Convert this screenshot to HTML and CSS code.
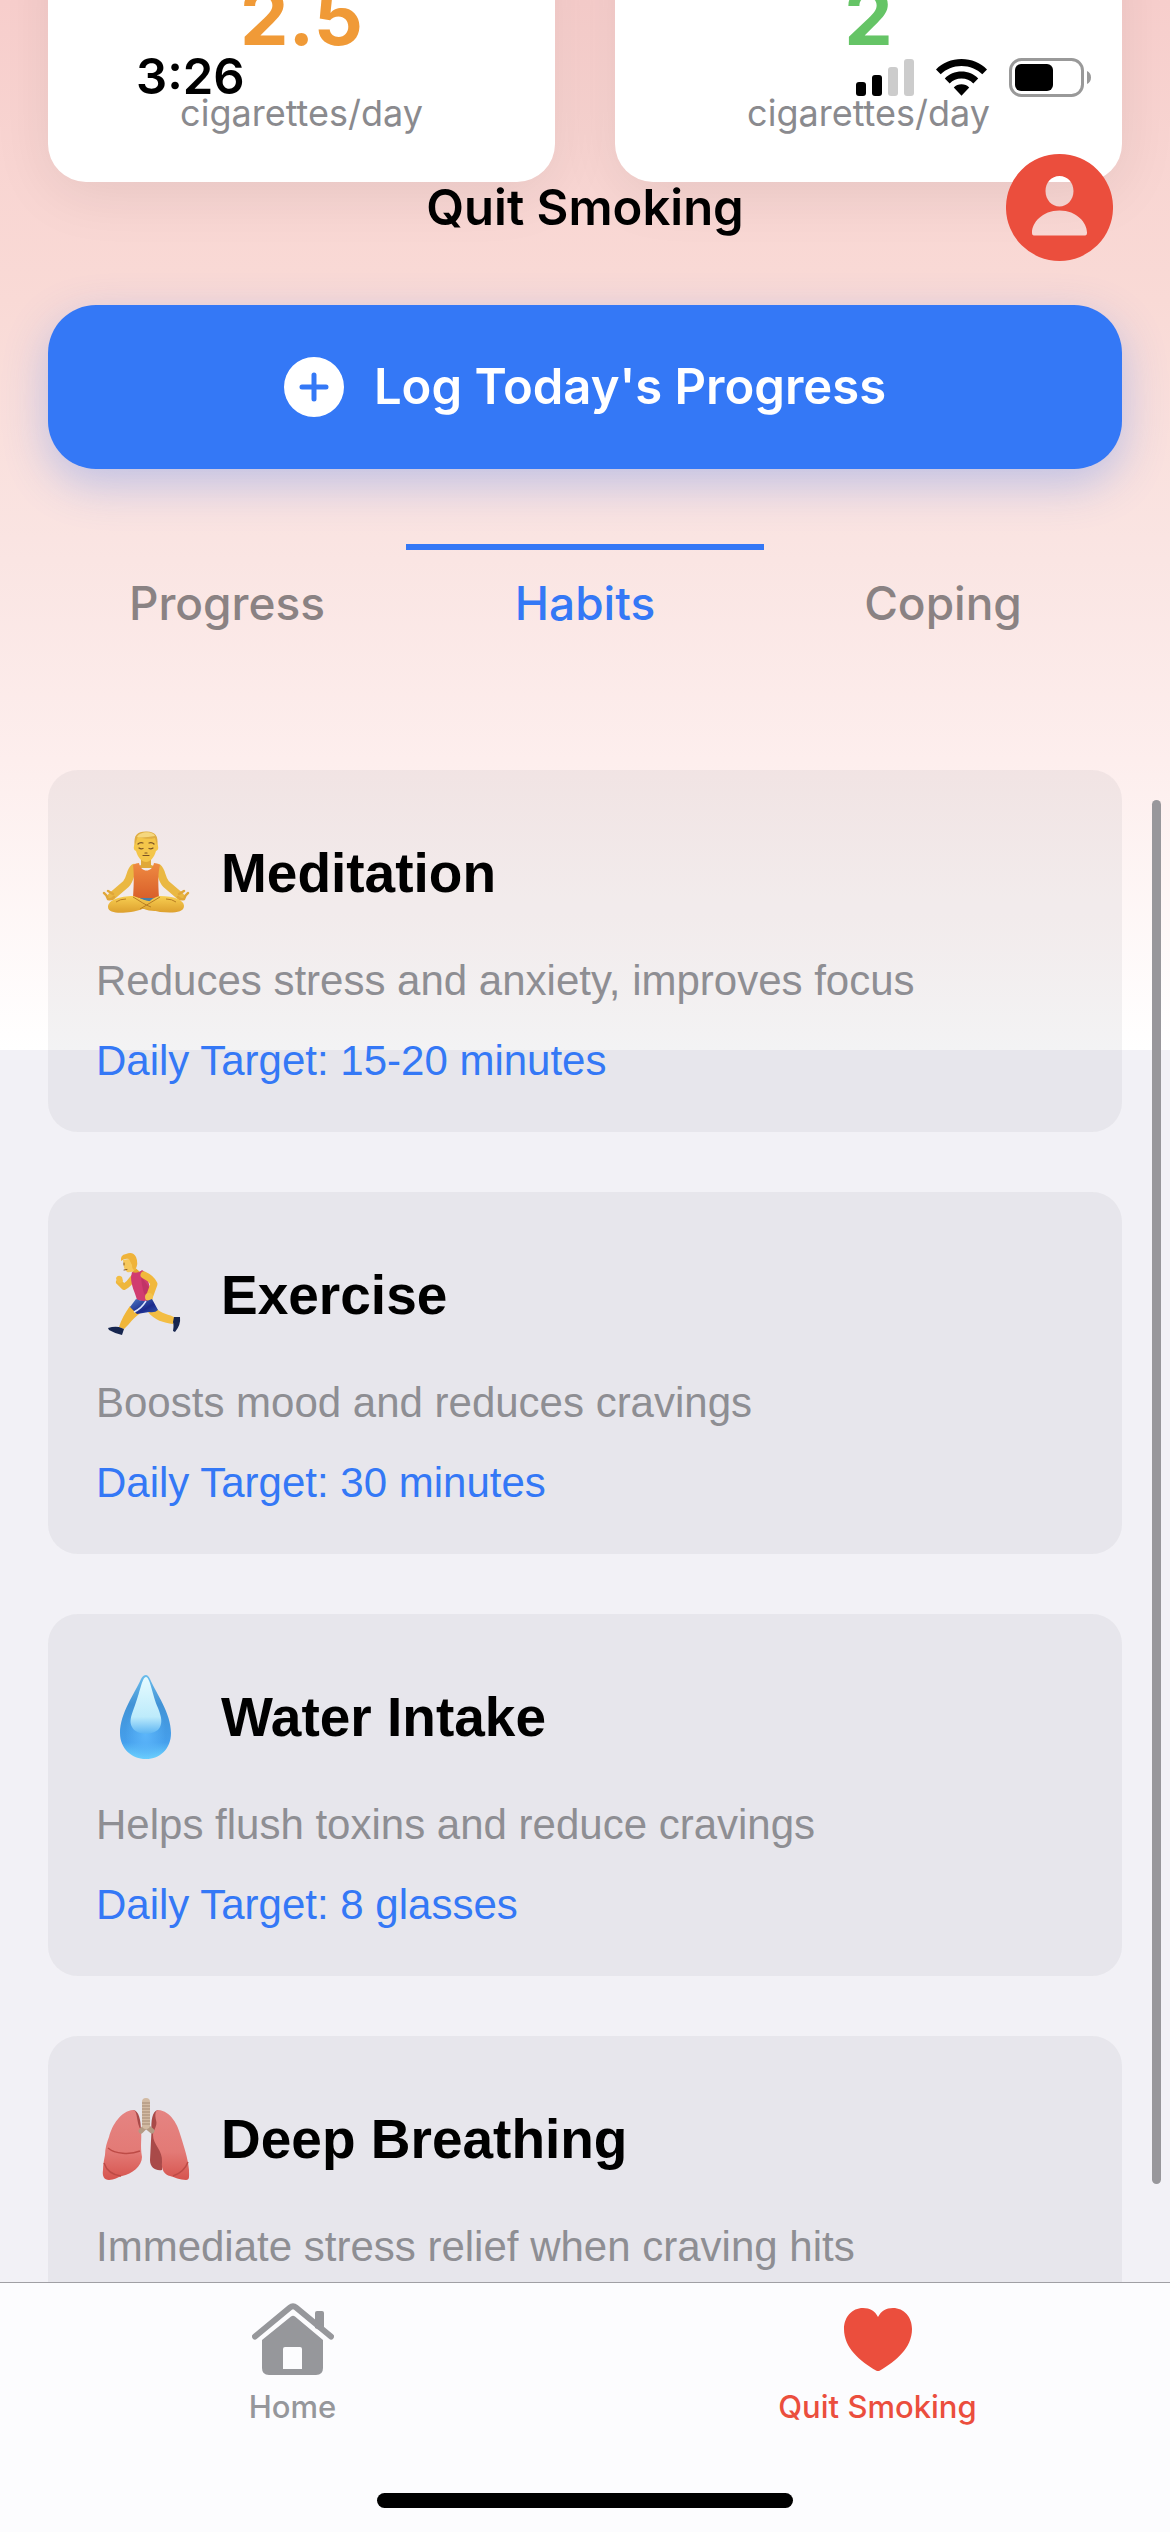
FILE: index.html
```html
<!DOCTYPE html>
<html lang="en">
<head>
<meta charset="utf-8">
<meta name="viewport" content="width=device-width, initial-scale=1">
<title>Quit Smoking</title>
<link rel="stylesheet" href="styles.css">
</head>
<body>
<div class="app">
  <header class="top">
    <div class="status">
      <time class="clock">3:26</time>
      <div class="status-icons">
        <svg class="signal" viewBox="0 0 58 37" aria-hidden="true">
          <rect x="0" y="23" width="10" height="14" rx="3"/>
          <rect x="16" y="16" width="10" height="21" rx="3"/>
          <rect x="32" y="8" width="10" height="29" rx="3" opacity=".2"/>
          <rect x="48" y="0" width="10" height="37" rx="3" opacity=".2"/>
        </svg>
        <svg class="wifi" viewBox="0 0 51 37" aria-hidden="true">
          <path d="M25.500 0C35.500 0 44.500 3.900 51 10.400L46.300 15.300C41 10 33.700 6.900 25.500 6.900S10 10 4.700 15.300L0 10.400C6.500 3.900 15.500 0 25.500 0Z"/>
          <path d="M25.500 12.600C32 12.600 37.900 15.200 42.200 19.400L37.300 24.400C34.200 21.400 30.100 19.600 25.500 19.600S16.800 21.400 13.700 24.400L8.800 19.400C13.100 15.200 19 12.600 25.500 12.600Z"/>
          <path d="M25.500 25.300C28.500 25.300 31.200 26.500 33.200 28.500L25.500 36.800L17.800 28.500C19.800 26.500 22.500 25.300 25.500 25.300Z"/>
        </svg>
        <svg class="battery" viewBox="0 0 82 39" aria-hidden="true">
          <rect x="1.500" y="1.500" width="72" height="36" rx="11" fill="none" stroke="#999" stroke-width="3"/>
          <rect x="6" y="6" width="38" height="27" rx="6"/>
          <path d="M78 13C80.500 14 82 16.500 82 19.500S80.500 25 78 26Z" fill="#999"/>
        </svg>
      </div>
    </div>
    <div class="nav">
      <h1>Quit Smoking</h1>
      <button class="avatar" type="button" aria-label="Profile">
        <svg viewBox="0 0 107 107" aria-hidden="true">
          <path fill="#eb4e3d" fill-rule="evenodd" d="M53.500 0A53.500 53.500 0 1 1 53.500 107A53.500 53.500 0 1 1 53.500 0ZM53.500 22C45.500 22 39.500 28.500 39.500 37C39.500 46 46 52.500 53.500 52.500S67.500 46 67.500 37C67.500 28.500 61.500 22 53.500 22ZM53.500 56.500C36 56.500 26 69 26 78.500C26 80.500 26.500 81.500 28 81.500H79C80.500 81.500 81 80.500 81 78.500C81 69 71 56.500 53.500 56.500Z"/>
        </svg>
      </button>
    </div>
  </header>

  <main class="content">
    <section class="stats">
      <div class="stat">
        <strong class="value orange">2.5</strong>
        <span class="unit">cigarettes/day</span>
      </div>
      <div class="stat">
        <strong class="value green">2</strong>
        <span class="unit">cigarettes/day</span>
      </div>
    </section>

    <button class="log" type="button">
      <svg viewBox="0 0 60 60" aria-hidden="true">
        <path fill="#fff" fill-rule="evenodd" d="M30 0A30 30 0 1 1 30 60A30 30 0 1 1 30 0ZM30 15.500A2.500 2.500 0 0 0 27.500 18V27.500H18A2.500 2.500 0 0 0 18 32.500H27.500V42A2.500 2.500 0 0 0 32.500 42V32.500H42A2.500 2.500 0 0 0 42 27.500H32.500V18A2.500 2.500 0 0 0 30 15.500Z"/>
      </svg>
      <span>Log Today's Progress</span>
    </button>

    <div class="segments" role="tablist">
      <button type="button" role="tab" aria-selected="false">Progress</button>
      <button type="button" role="tab" aria-selected="true">Habits</button>
      <button type="button" role="tab" aria-selected="false">Coping</button>
    </div>

    <section class="habits">
      <article class="habit">
        <div class="habit-head">
          <svg class="emoji" viewBox="0 0 100 100" aria-hidden="true">
            <defs>
              <linearGradient id="skin" x1="0" y1="0" x2="0" y2="1"><stop offset="0" stop-color="#f8cf52"/><stop offset="1" stop-color="#dda02e"/></linearGradient>
              <linearGradient id="tank" x1="0" y1="0" x2="0" y2="1"><stop offset="0" stop-color="#ef8a42"/><stop offset="1" stop-color="#d9602a"/></linearGradient>
            </defs>
            <path fill="#e0a838" d="M45 34H55V42L63 45H37L45 42Z"/>
            <path fill="none" stroke="#eab843" stroke-width="8" stroke-linecap="round" stroke-linejoin="round" d="M38 45C34 48 35 56 30 61L16 73M62 45C66 48 65 56 70 61L84 73"/>
            <path fill="#4a7fa5" d="M44 72H58V86H44Z"/>
            <path fill="url(#tank)" d="M37 42Q40 40 43 40C45 50 56 50 58 40Q61 40 64 42C62 50 62 58 63 75H37C38 58 38 50 37 42Z"/>
            <path fill="url(#skin)" d="M37 73C45 75 57 81 66 87C56 90 45 86 37 80Z"/>
            <path fill="url(#skin)" d="M64 73C78 73 88 77 88 83C88 90 76 90 64 89C58 88 53 86 49 83C53 78 58 74 64 73Z"/>
            <path fill="url(#skin)" d="M37 73C24 73 12 77 12 84C12 91 26 90 35 89C43 88 50 85 58 79C50 78 43 76 37 73Z"/>
            <path fill="none" stroke="#b87d22" stroke-width="1" d="M37 74C44 78 49 82 55 84M20 79Q24 76 30 76M80 79Q76 76 70 76M64 74L54 80L44 86"/>
            <g fill="none" stroke="#e0a638" stroke-width="2.500" stroke-linecap="round"><path d="M8 70Q11 72 12 76Q16 77 18 74M12 68L17 71M92 70Q89 72 88 76Q84 77 82 74M88 68L83 71"/></g>
            <path fill="#f4c64a" d="M39 17C39 12 43 10 50 10S61 12 61 17L62 23Q63 27 60 28C58 35 54 39 50 39S42 35 40 28Q37 27 38 23Z"/>
            <path fill="#dfae45" d="M39 22C37 12 42 8 51 8.500C59 9 63 13 61 22L59 15C51 17 44 15 42 13Z"/>
            <path fill="#f5d77e" d="M41 14C44 8 57 8 59 13C52 14 46 15 41 14Z"/>
            <path fill="none" stroke="#7b5325" stroke-width="1.200" stroke-linecap="round" d="M42 21Q44 19 47 20M53 20Q56 19 58 21M43 25Q45 26.500 47 25.500M53 25.500Q55 26.500 57 25M49 30H51M47 32.500H53"/>
          </svg>
          <h2>Meditation</h2>
        </div>
        <p class="about">Reduces stress and anxiety, improves focus</p>
        <p class="target">Daily Target: 15-20 minutes</p>
      </article>

      <article class="habit">
        <div class="habit-head">
          <svg class="emoji" viewBox="0 0 100 100" aria-hidden="true">
            <defs>
              <linearGradient id="shorts" x1="0" y1="0" x2="1" y2="1"><stop offset="0" stop-color="#4a78c4"/><stop offset=".6" stop-color="#1b2a8c"/><stop offset="1" stop-color="#3559ad"/></linearGradient>
            </defs>
            <path fill="none" stroke="#eeb63c" stroke-width="6" stroke-linecap="round" stroke-linejoin="round" d="M37 33Q33 39 28 42L23 37"/>
            <path fill="#f3bd43" d="M20 33Q22 29 26 32L27 36Q24 40 21 37Z"/>
            <path fill="#f0b63a" d="M34 61L46 67C40 71 36 75 33 79L28 84L23 82C25 75 29 68 34 61Z"/>
            <path fill="#f3bd43" d="M52 67L60 63C65 69 73 69 80 73L77 79C68 78 58 75 52 67Z"/>
            <path fill="#17264f" d="M12 83Q18 81 23 82L28 84L26 90Q18 88 13 85ZM78 72L84 72Q85 80 79 87L77 86Q78 80 77 77Z"/>
            <path fill="#e5a730" d="M36 20L44 27L37 32Z"/>
            <path fill="#d13c70" d="M36 27Q42 29 46 25Q50 27 51 32L56 50Q54 56 50 57L41 55C39 47 35 41 35 32Z"/>
            <path fill="#b42d5f" opacity=".55" d="M45 31L54 44L52 56Q46 48 45 31Z"/>
            <path fill="none" stroke="#f1b83d" stroke-width="7" stroke-linecap="round" stroke-linejoin="round" d="M48 30Q55 33 58 39L54 50"/>
            <circle cx="53" cy="52" r="4" fill="#f4c34b"/>
            <path fill="url(#shorts)" d="M40 54Q48 58 56 54L62 65Q59 68 53 67L41 69L34 62Z"/>
            <path fill="none" stroke="#dbe6ff" stroke-width="1.500" d="M50 56Q45 64 38 67"/>
            <path fill="#f6c85b" d="M27 15L39 13L40 24Q36 28 31 27L28 23Z"/>
            <path fill="#efb33a" d="M25 16Q24 10 30 9Q37 6 40 12Q43 19 39 25Q36 25 36 20L33 14Q29 13 25 16Z"/>
            <path fill="none" stroke="#8b5a20" stroke-width="1" stroke-linecap="round" d="M28 18V20M28 25L31 24.500"/>
          </svg>
          <h2>Exercise</h2>
        </div>
        <p class="about">Boosts mood and reduces cravings</p>
        <p class="target">Daily Target: 30 minutes</p>
      </article>

      <article class="habit">
        <div class="habit-head">
          <svg class="emoji" viewBox="0 0 100 100" aria-hidden="true">
            <defs>
              <linearGradient id="drop" x1="0" y1="0" x2="0" y2="1"><stop offset="0" stop-color="#6bbdec"/><stop offset=".35" stop-color="#4293d6"/><stop offset=".8" stop-color="#459fec"/><stop offset="1" stop-color="#6fd6ff"/></linearGradient>
              <linearGradient id="shine" x1="0" y1="0" x2="0" y2="1"><stop offset="0" stop-color="#e6fbff"/><stop offset=".7" stop-color="#bdebfb"/><stop offset="1" stop-color="#5db5f3"/></linearGradient>
              <radialGradient id="glow" cx=".5" cy=".7" r=".4"><stop offset="0" stop-color="#5cb6fa"/><stop offset="1" stop-color="#5cb6fa" stop-opacity="0"/></radialGradient>
            </defs>
            <path fill="url(#drop)" d="M50 8Q52 8 54 12C60 26 75 46 75 66C75 82 64 92 50 92S24 82 24 66C24 46 39 26 45 12Q47 8 50 8Z"/>
            <path fill="url(#glow)" d="M50 8Q52 8 54 12C60 26 75 46 75 66C75 82 64 92 50 92S24 82 24 66C24 46 39 26 45 12Q47 8 50 8Z"/>
            <path fill="url(#shine)" d="M50 10C54 10 56 27 62 41C66 51 66 56 64 60C60 69 40 69 36 60C33 55 35 49 38 41C44 26 46 10 50 10Z"/>
          </svg>
          <h2>Water Intake</h2>
        </div>
        <p class="about">Helps flush toxins and reduce cravings</p>
        <p class="target">Daily Target: 8 glasses</p>
      </article>

      <article class="habit">
        <div class="habit-head">
          <svg class="emoji" viewBox="0 0 100 100" aria-hidden="true">
            <defs>
              <linearGradient id="lung" x1="0" y1="0" x2="0" y2="1"><stop offset="0" stop-color="#e58482"/><stop offset=".6" stop-color="#e37a76"/><stop offset="1" stop-color="#d6544e"/></linearGradient>
            </defs>
            <path fill="#a94a49" d="M37 21C43 21 45 32 45 42L40 40ZM62 21C56 22 55 32 55.500 42L54 71C54 79 60 82 66 81L68 55Z"/>
            <path fill="url(#lung)" d="M37 21C42 21 40 34 45 41C46 50 44 56 46 68C46 77 36 85 26 87C22 88 18 91 13 91C8 91 6 87 7 81C7 76 8 71 9 66C9 59 11 53 13 48C16 36 25 22 37 21Z"/>
            <path fill="url(#lung)" d="M62 21C75 22 82 36 85 48C88 58 92 69 93 81C93 87 94 91 90 91C84 91 78 88 74 87C69 86 65 81 66 73C67 61 57 56 57 46C57 41 62 37 60 31C59 26 59 22 62 21Z"/>
            <path fill="none" stroke="#bd4b46" stroke-width="1.500" d="M12 59C19 65 34 66 44 62M8 74C11 83 17 86 25 87M92 73C89 81 83 85 77 87"/>
            <path fill="none" stroke="#b49a84" stroke-width="5" stroke-linecap="round" d="M50 37L45 42M50 37L56 42"/>
            <path fill="none" stroke="#d2baa3" stroke-width="8" stroke-linecap="round" d="M50 13V36"/>
            <path fill="none" stroke="#a58a74" stroke-width="1" d="M46 14H54M46 17H54M46 20H54M46 23H54M46 26H54M46 29H54M46 32H54M46 35H54"/>
          </svg>
          <h2>Deep Breathing</h2>
        </div>
        <p class="about">Immediate stress relief when craving hits</p>
      </article>
    </section>
    <div class="scrollbar"></div>
  </main>

  <footer class="bottom">
    <nav class="tabbar">
      <a class="tab" href="#home">
        <svg viewBox="0 0 82 72" aria-hidden="true" fill="currentColor">
          <path d="M63 25V10Q63 8 65 8H70Q72 8 72 10V29Z"/>
          <path fill="none" stroke="currentColor" stroke-width="6" stroke-linecap="round" stroke-linejoin="round" d="M3 33.500L38 4.500Q41 2 44 4.500L79 33.500"/>
          <path fill-rule="evenodd" d="M39 13.500Q41 12 43 13.500L71 37V65Q71 72 64 72H17Q10 72 10 65V37ZM33 44Q31 44 31 46V66H50V46Q50 44 48 44Z"/>
        </svg>
        <span>Home</span>
      </a>
      <a class="tab current" href="#quit" aria-current="page">
        <svg viewBox="0 0 82 72" aria-hidden="true" fill="currentColor">
          <path d="M41 14C44 8 49 5 56 5C67 5 75 14 75 26C75 45 59 58 43 67.500Q41 68.500 39 67.500C23 58 7 45 7 26C7 14 15 5 26 5C33 5 38 8 41 14Z"/>
        </svg>
        <span>Quit Smoking</span>
      </a>
    </nav>
    <div class="home-indicator"></div>
  </footer>
</div>
</body>
</html>
```
FILE: styles.css
```css
* {
  box-sizing: border-box;
  margin: 0;
}

body {
  font-family: Inter, "Liberation Sans", sans-serif;
  color: #000;
}

button {
  border: 0;
  padding: 0;
  background: none;
  font: inherit;
  color: inherit;
}

svg {
  display: block;
  flex: none;
}

.app {
  position: relative;
  display: flex;
  flex-direction: column;
  height: 100vh;
  overflow: hidden;
  background: linear-gradient(#f8cfcd 0, #f9dad6 300px, #fae5e3 560px, #fdeeed 760px, #fff 1050px) top / 100% 1050px no-repeat #f2f1f6;
}

/* Status bar and title float over the scrolled content */
.top {
  position: absolute;
  inset: 0 0 auto;
  z-index: 1;
}

.status {
  display: flex;
  align-items: center;
  justify-content: space-between;
  height: 154px;
  padding: 0 79px 0 136px;
}

.clock {
  font-size: 49px;
  font-weight: 600;
  line-height: 60px;
}

.status-icons {
  display: flex;
  align-items: center;
  gap: 22px;
}

.signal { width: 58px; height: 37px; }
.wifi { width: 51px; height: 37px; }
.battery { width: 82px; height: 39px; }

.nav {
  display: grid;
  grid-template-columns: 1fr auto 1fr;
  align-items: center;
  padding: 0 57px;
}

.nav h1 {
  grid-column: 2;
  font-size: 49px;
  font-weight: 600;
  line-height: 60px;
}

.avatar {
  justify-self: end;
}

.avatar svg {
  width: 107px;
  height: 107px;
}

.content {
  position: relative;
  flex: 1;
  min-height: 0;
  overflow: hidden;
  padding: 0 48px;
}

/* The cards are partly scrolled off the top */
.stats {
  display: grid;
  grid-template-columns: 1fr 1fr;
  gap: 60px;
  margin-top: -86px;
}

.stat {
  display: flex;
  flex-direction: column;
  align-items: center;
  gap: 20px;
  padding: 48px;
  border-radius: 38px;
  background: #fff;
  box-shadow: 0 12px 60px rgba(0, 0, 0, .08);
}

.value {
  font-size: 77px;
  font-weight: 700;
  line-height: 110px;
}

.orange { color: #f09a37; }
.green { color: #65c466; }

.unit {
  font-size: 36px;
  line-height: 42px;
  color: #8a8a8e;
}

.log {
  display: flex;
  align-items: center;
  justify-content: center;
  gap: 30px;
  width: 100%;
  height: 164px;
  margin-top: 123px;
  border-radius: 48px;
  background: #3478f6;
  color: #fff;
  font-size: 49px;
  font-weight: 600;
  line-height: 60px;
  box-shadow: 0 15px 45px rgba(52, 120, 246, .3);
}

.log svg {
  width: 60px;
  height: 60px;
}

.segments {
  display: grid;
  grid-template-columns: repeat(3, 1fr);
  margin-top: 75px;
}

.segments button {
  padding: 24px 0;
  border-top: 6px solid transparent;
  font-size: 46px;
  font-weight: 500;
  line-height: 58px;
  color: #8a8283;
}

.segments button[aria-selected="true"] {
  border-color: #3478f6;
  color: #3478f6;
}

.habits {
  display: flex;
  flex-direction: column;
  gap: 60px;
  margin-top: 114px;
}

.habit {
  padding: 45px 48px;
  border-radius: 30px;
  background: rgba(142, 142, 147, .1);
  font-family: "Liberation Sans", Arial, sans-serif;
  font-size: 42px;
  line-height: 52px;
}

.habit-head {
  display: flex;
  align-items: center;
  gap: 25px;
  height: 116px;
  margin-bottom: 24px;
}

.habit-head h2 {
  font-size: 55px;
  font-weight: 700;
  line-height: 64px;
}

.emoji {
  width: 100px;
  height: 100px;
}

.about {
  margin-bottom: 28px;
  color: #8e8e93;
}

.target {
  color: #3478f6;
}

.scrollbar {
  position: absolute;
  top: 800px;
  right: 9px;
  bottom: 98px;
  width: 9px;
  border-radius: 5px;
  background: #98979b;
}

.bottom {
  display: flex;
  flex-direction: column;
  align-items: center;
  border-top: 1px solid #a09fa4;
  padding: 20px 0 24px;
  background: #fcfcfe;
}

.tabbar {
  display: grid;
  grid-template-columns: 1fr 1fr;
  width: 100%;
}

.tab {
  display: flex;
  flex-direction: column;
  align-items: center;
  gap: 14px;
  color: #96979b;
  font-size: 31px;
  font-weight: 500;
  line-height: 36px;
  text-decoration: none;
}

.tab.current {
  color: #eb4e3d;
}

.tab svg {
  width: 82px;
  height: 72px;
}

.home-indicator {
  width: 416px;
  height: 15px;
  margin-top: 68px;
  border-radius: 8px;
  background: #000;
}
```
